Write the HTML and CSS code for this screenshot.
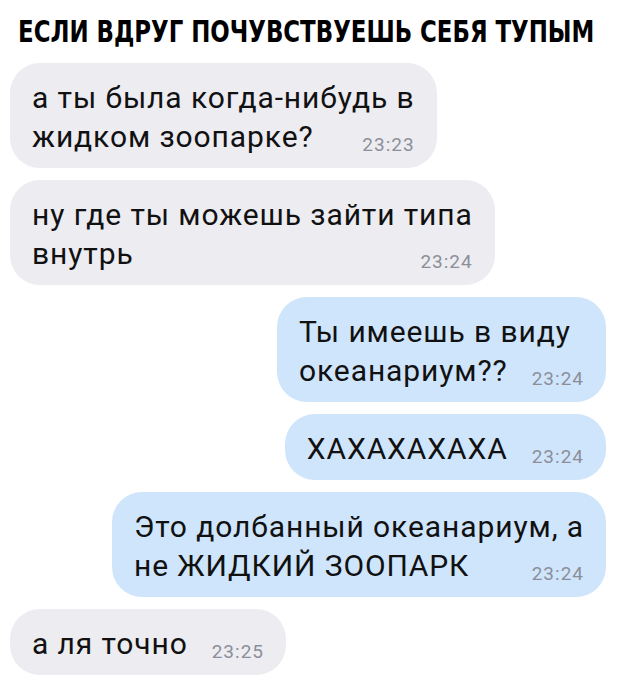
FILE: index.html
```html
<!DOCTYPE html>
<html>
<head>
<meta charset="utf-8">
<title>Если вдруг почувствуешь себя тупым</title>
<link rel="stylesheet" href="styles.css">
</head>
<body>
	<article class="chat">
		<h1 class="title"><span class="titleText">ЕСЛИ ВДРУГ ПОЧУВСТВУЕШЬ СЕБЯ ТУПЫМ</span></h1>
		<section class="messages">
			<div class="msg in">
				<div class="bubble">
					<div class="line">а ты была когда-нибудь в</div>
					<div class="line last"><span>жидком зоопарке?</span><span class="time">23:23</span></div>
				</div>
			</div>
			<div class="msg in">
				<div class="bubble">
					<div class="line">ну где ты можешь зайти типа</div>
					<div class="line last"><span>внутрь</span><span class="time">23:24</span></div>
				</div>
			</div>
			<div class="msg out">
				<div class="bubble">
					<div class="line">Ты имеешь в виду</div>
					<div class="line last"><span>океанариум??</span><span class="time">23:24</span></div>
				</div>
			</div>
			<div class="msg out">
				<div class="bubble">
					<div class="line last"><span>ХАХАХАХАХА</span><span class="time">23:24</span></div>
				</div>
			</div>
			<div class="msg out">
				<div class="bubble">
					<div class="line">Это долбанный океанариум, а</div>
					<div class="line last"><span>не ЖИДКИЙ ЗООПАРК</span><span class="time">23:24</span></div>
				</div>
			</div>
			<div class="msg in">
				<div class="bubble">
					<div class="line last"><span>а ля точно</span><span class="time">23:25</span></div>
				</div>
			</div>
		</section>
	</article>
</body>
</html>
```

FILE: styles.css
```css
body{
	margin:0;
	background-color:white;
	font-family:Roboto, "Liberation Sans", sans-serif;
	color:#111;
}
.chat{
	width:620px;
	overflow:hidden;
}
.title{
	margin:0;
	padding:13px 0 0 18px;
	font-family:"DejaVu Sans Condensed", "DejaVu Sans", sans-serif;
	font-weight:bold;
	font-size:31px;
	line-height:36px;
	color:black;
	white-space:nowrap;
}
.titleText{
	display:inline-block;
	transform:scaleX(0.82);
	transform-origin:left center;
}
.messages{
	display:flex;
	flex-direction:column;
	gap:12px;
	padding:14px 14px 0 10px;
}
.msg{
	display:flex;
}
.msg.out{
	justify-content:flex-end;
}
.bubble{
	padding:15px 22px 12px 22px;
	border-radius:30px;
	font-size:30px;
	line-height:39px;
	letter-spacing:0.9px;
	white-space:nowrap;
}
.in .bubble{
	background-color:#ececf1;
}
.out .bubble{
	background-color:#cfe5fc;
}
.last{
	display:flex;
	justify-content:space-between;
	gap:24px;
}
.time{
	align-self:flex-end;
	font-size:19px;
	line-height:22px;
	letter-spacing:1px;
	color:#8c8f99;
}
```
